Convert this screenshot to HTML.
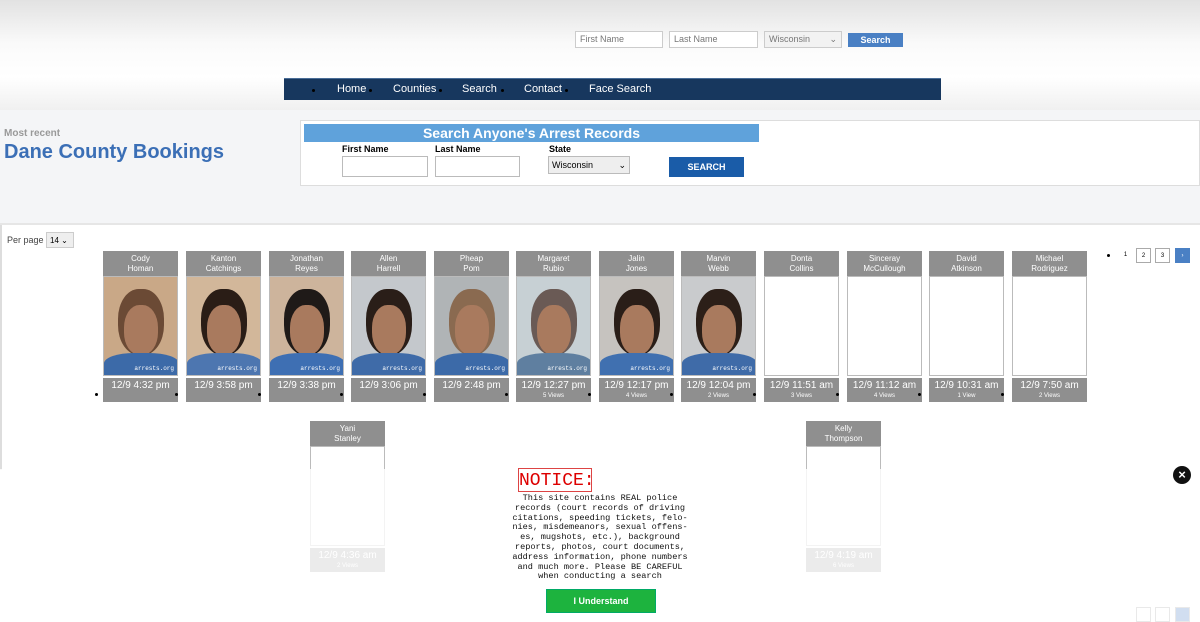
<!DOCTYPE html>
<html><head><meta charset="utf-8"><style>
*{box-sizing:border-box}
body{margin:0;width:1200px;height:620px;overflow:hidden;font-family:"Liberation Sans",sans-serif;background:#fff;position:relative}
.hdr{position:absolute;left:0;top:0;width:1200px;height:110px;background:linear-gradient(#e2e2e2,#fafafa 40%,#fff 70%,#f0f0f0)}
.in{position:absolute;height:17px;border:1px solid #ccc;background:#fff;font-size:9px;color:#777;padding:2px 4px}
.nav{position:absolute;left:284px;top:78px;width:657px;height:22px;background:#17375e;border-top:1px solid #4a6d97}
.nav span{position:absolute;top:4px;color:#fff;font-size:11px}
.nav i{position:absolute;top:10px;width:3px;height:3px;background:#000;border-radius:50%}
.band{position:absolute;left:0;top:110px;width:1200px;height:115px;background:#f4f5f7;border-bottom:2px solid #e6e6e6}
.sbox{position:absolute;left:300px;top:120px;width:900px;height:66px;background:#fff;border:1px solid #ddd}
.card{position:absolute;width:75px}
.card .n{height:25px;background:#8f8f8f;color:#fff;font-size:8px;text-align:center;line-height:10px;padding-top:3px}
.card .p{height:100px;border:1px solid #bbb;background:#fff;position:relative;overflow:hidden}
.card .t{height:24px;background:#8f8f8f;color:#fff;font-size:10px;text-align:center;margin-top:2px;padding-top:2px}
.card .t small{display:block;font-size:6px;margin-top:2px}
.dot{position:absolute;width:3px;height:3px;background:#000;border-radius:50%}
.pg{position:absolute;width:15px;height:15px;border:1px solid #aaa;font-size:6px;text-align:center;line-height:14px;background:#fff}
</style></head><body>
<div class="hdr"></div>
<div class="in" style="left:575px;top:31px;width:88px">First Name</div>
<div class="in" style="left:669px;top:31px;width:89px">Last Name</div>
<div class="in" style="left:764px;top:31px;width:78px;background:#f2f2f2">Wisconsin <span style="float:right">⌄</span></div>
<div style="position:absolute;left:848px;top:33px;width:55px;height:14px;background:#4a80c4;color:#fff;font-size:9px;text-align:center;line-height:14px;font-weight:bold">Search</div>
<div class="nav"><i style="left:28px"></i><span style="left:53px">Home</span><i style="left:85px"></i><span style="left:109px">Counties</span><i style="left:155px"></i><span style="left:178px">Search</span><i style="left:217px"></i><span style="left:240px">Contact</span><i style="left:281px"></i><span style="left:305px">Face Search</span></div>
<div class="band"></div>
<div style="position:absolute;left:4px;top:128px;font-size:10px;color:#999;font-weight:bold">Most recent</div>
<div style="position:absolute;left:4px;top:141px;font-size:20px;color:#3b6fb6;font-weight:bold">Dane County Bookings</div>
<div class="sbox"></div>
<div style="position:absolute;left:304px;top:124px;width:455px;height:18px;background:#5fa2db;color:#fff;font-weight:bold;font-size:14px;text-align:center;line-height:18px">Search Anyone's Arrest Records</div>
<div style="position:absolute;left:342px;top:144px;font-size:9px;font-weight:bold">First Name</div>
<div style="position:absolute;left:435px;top:144px;font-size:9px;font-weight:bold">Last Name</div>
<div style="position:absolute;left:549px;top:144px;font-size:9px;font-weight:bold">State</div>
<div style="position:absolute;left:342px;top:156px;width:86px;height:21px;border:1px solid #bbb"></div>
<div style="position:absolute;left:435px;top:156px;width:85px;height:21px;border:1px solid #bbb"></div>
<div style="position:absolute;left:548px;top:156px;width:82px;height:18px;border:1px solid #bbb;background:#eee;font-size:9px;padding:3px">Wisconsin<span style="float:right">⌄</span></div>
<div style="position:absolute;left:669px;top:157px;width:75px;height:20px;background:#1a5ca8;color:#fff;font-size:9px;font-weight:bold;text-align:center;line-height:20px">SEARCH</div>
<div style="position:absolute;left:7px;top:235px;font-size:9px;color:#444">Per page</div>
<div style="position:absolute;left:46px;top:232px;width:28px;height:16px;border:1px solid #ccc;background:#eee;font-size:8px;padding:3px">14 ⌄</div>
<div id="cards"></div>
<div class="dot" style="left:1107px;top:254px"></div>
<div class="pg" style="left:1118px;top:248px;border:none">1</div>
<div class="pg" style="left:1136px;top:248px">2</div>
<div class="pg" style="left:1155px;top:248px">3</div>
<div class="pg" style="left:1175px;top:248px;background:#4a80c4;border-color:#4a80c4;color:#fff">›</div>
<div style="position:absolute;left:0;top:225px;width:2px;height:245px;background:#ddd"></div>
<div style="position:absolute;left:0;top:469px;width:1200px;height:151px;background:rgba(255,255,255,.82)"></div>
<div style="position:absolute;left:507px;top:463px;width:186px;height:157px;background:#fff"></div>
<div style="position:absolute;left:518px;top:468px;width:74px;height:24px;border:1px solid #d44;color:#d00;font-family:'Liberation Mono',monospace;font-size:18px;text-align:center;line-height:24px">NOTICE:</div>
<div style="position:absolute;left:508px;top:494px;width:184px;font-family:'Liberation Mono',monospace;font-size:8.6px;line-height:9.8px;text-align:center;color:#111">This site contains REAL police records (court records of driving citations, speeding tickets, felo-nies, misdemeanors, sexual offens-es, mugshots, etc.), background reports, photos, court documents, address information, phone numbers and much more. Please BE CAREFUL when conducting a search</div>
<div style="position:absolute;left:546px;top:589px;width:110px;height:24px;background:#1db33e;border:1px solid #0a6;color:#fff;font-size:9px;font-weight:bold;text-align:center;line-height:22px">I Understand</div>
<div style="position:absolute;left:1173px;top:466px;width:18px;height:18px;border-radius:50%;background:#111;color:#fff;font-size:13px;font-weight:bold;text-align:center;line-height:18px">×</div>
<div style="position:absolute;left:1118px;top:607px;width:72px;height:13px;opacity:.25"><div class="pg" style="left:18px;top:0"></div><div class="pg" style="left:37px;top:0"></div><div class="pg" style="left:57px;top:0;background:#4a80c4"></div></div>
<script>
var d=[["Cody","Homan","12/9 4:32 pm","",["#c9a887","#6b4a35","#3c6aa8"]],["Kanton","Catchings","12/9 3:58 pm","",["#d2b79a","#2a1d16","#4d76b0"]],["Jonathan","Reyes","12/9 3:38 pm","",["#cdb49c","#1f1a18","#3e6fb3"]],["Allen","Harrell","12/9 3:06 pm","",["#c4c8cc","#2a1e18","#3f6ba8"]],["Pheap","Pom","12/9 2:48 pm","",["#b0b4b6","#8a6a50","#3c6aa8"]],["Margaret","Rubio","12/9 12:27 pm","5 Views",["#c7d0d4","#6a5a55","#5f7fa0"]],["Jalin","Jones","12/9 12:17 pm","4 Views",["#c6c3bf","#2a1e18","#4070b0"]],["Marvin","Webb","12/9 12:04 pm","2 Views",["#c9cbcd","#2c1f18","#3f6ba8"]],["Donta","Collins","12/9 11:51 am","3 Views"],["Sinceray","McCullough","12/9 11:12 am","4 Views"],["David","Atkinson","12/9 10:31 am","1 View"],["Michael","Rodriguez","12/9 7:50 am","2 Views"]];
var h="",xs=[103,186,269,351,434,516,599,681,764,847,929,1012];
function card(x,y,a){var p=a[4]?'<div style="position:absolute;inset:0;background:'+a[4][0]+'"></div><div style="position:absolute;left:14px;top:12px;width:46px;height:66px;border-radius:45%;background:'+a[4][1]+'"></div><div style="position:absolute;left:20px;top:28px;width:34px;height:50px;border-radius:45%;background:#a97a5e"></div><div style="position:absolute;left:0;top:76px;width:75px;height:26px;border-radius:40% 40% 0 0;background:'+a[4][2]+'"></div><div style="position:absolute;right:3px;bottom:3px;font-size:6px;color:#fff;font-family:Liberation Mono">arrests.org</div>':'';
return '<div class="card" style="left:'+x+'px;top:'+y+'px"><div class="n">'+a[0]+'<br>'+a[1]+'</div><div class="p">'+p+'</div><div class="t">'+a[2]+(a[3]?'<small>'+a[3]+'</small>':'')+'</div></div>';}
d.forEach(function(a,i){h+=card(xs[i],251,a);h+='<div class="dot" style="left:'+(xs[i]-11+(i?0:3)-(i?0:0))+'px;top:393px"></div>';});
h+=card(310,421,["Yani","Stanley","12/9 4:36 am","2 Views"])+card(806,421,["Kelly","Thompson","12/9 4:19 am","6 Views"]);
document.getElementById("cards").innerHTML=h;
</script>
</body></html>
